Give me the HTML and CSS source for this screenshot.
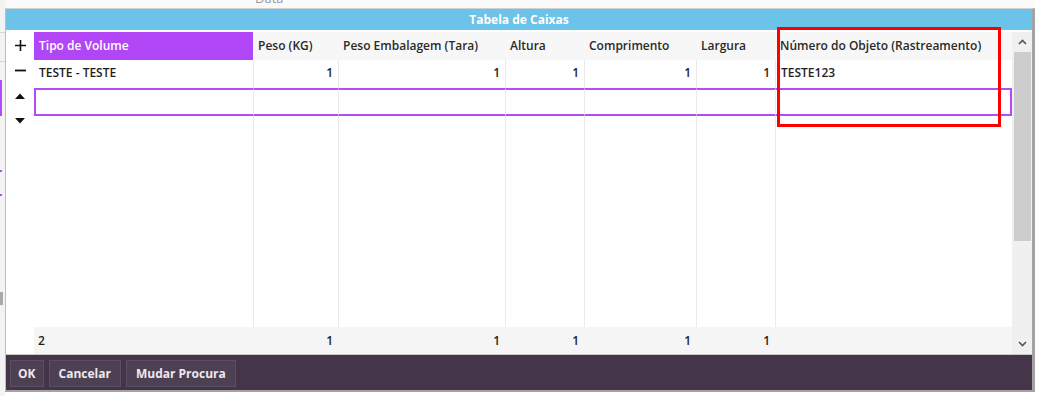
FILE: index.html
```html
<!DOCTYPE html>
<html lang="pt">
<head>
    <meta charset="UTF-8">
    <meta name="viewport" content="width=device-width, initial-scale=1.0">
    <title>Tabela de Caixas</title>
    <link rel="stylesheet" href="styles.css">
</head>
<body>
    <div class="desk">
        <!-- pieces of the page behind the dialog -->
        <div class="edge">
            <span class="edge-line first"></span>
            <span class="edge-line second"></span>
            <span class="edge-mark tall"></span>
            <span class="edge-mark thin a"></span>
            <span class="edge-mark thin b"></span>
            <span class="edge-grey"></span>
        </div>

        <div class="stage">
            <div class="behind-top"><span>Data</span></div>

            <div class="dialog">
                <div class="dialog-title">Tabela de Caixas</div>

                <div class="dialog-body">
                    <div class="row-tools">
                        <button class="tool" title="Adicionar">
                            <svg width="11" height="11" viewBox="0 0 11 11"><path d="M5.5 0v11M0 5.5h11" stroke="#111" stroke-width="1.6"/></svg>
                        </button>
                        <button class="tool" title="Remover">
                            <svg width="11" height="11" viewBox="0 0 11 11"><path d="M0 5.5h11" stroke="#111" stroke-width="1.8"/></svg>
                        </button>
                        <button class="tool" title="Subir">
                            <svg width="10" height="6" viewBox="0 0 10 6"><path d="M0 6L5 0.5 10 6z" fill="#111"/></svg>
                        </button>
                        <button class="tool" title="Descer">
                            <svg width="10" height="6" viewBox="0 0 10 6"><path d="M0 0L5 5.5 10 0z" fill="#111"/></svg>
                        </button>
                    </div>

                    <div class="grid">
                        <div class="th active">Tipo de Volume</div>
                        <div class="th">Peso (KG)</div>
                        <div class="th">Peso Embalagem (Tara)</div>
                        <div class="th">Altura</div>
                        <div class="th">Comprimento</div>
                        <div class="th">Largura</div>
                        <div class="th">Número do Objeto (Rastreamento)</div>

                        <div class="td first">TESTE - TESTE</div>
                        <div class="td num">1</div>
                        <div class="td num">1</div>
                        <div class="td num">1</div>
                        <div class="td num">1</div>
                        <div class="td num">1</div>
                        <div class="td">TESTE123</div>

                        <div class="td sel first"></div>
                        <div class="td sel"></div>
                        <div class="td sel"></div>
                        <div class="td sel"></div>
                        <div class="td sel"></div>
                        <div class="td sel"></div>
                        <div class="td sel last"></div>

                        <div class="td fill first"></div>
                        <div class="td fill"></div>
                        <div class="td fill"></div>
                        <div class="td fill"></div>
                        <div class="td fill"></div>
                        <div class="td fill"></div>
                        <div class="td fill"></div>

                        <div class="tf">2</div>
                        <div class="tf num">1</div>
                        <div class="tf num">1</div>
                        <div class="tf num">1</div>
                        <div class="tf num">1</div>
                        <div class="tf num">1</div>
                        <div class="tf"></div>
                    </div>

                    <div class="vscroll">
                        <span class="vscroll-arrow">
                            <svg width="9" height="6" viewBox="0 0 9 6"><path d="M1 5L4.5 1.5 8 5" fill="none" stroke="#555" stroke-width="1.6"/></svg>
                        </span>
                        <span class="vscroll-thumb"></span>
                        <span class="vscroll-track"></span>
                        <span class="vscroll-arrow">
                            <svg width="9" height="6" viewBox="0 0 9 6"><path d="M1 1L4.5 4.5 8 1" fill="none" stroke="#555" stroke-width="1.6"/></svg>
                        </span>
                    </div>
                </div>

                <div class="dialog-actions">
                    <button class="action ok">OK</button>
                    <button class="action">Cancelar</button>
                    <button class="action">Mudar Procura</button>
                </div>
            </div>
        </div>

        <!-- annotation drawn over the screenshot -->
        <div class="highlight"></div>
    </div>
</body>
</html>
```

FILE: styles.css
```css
/* Base */
body {
    margin: 0;
    background: #fff;
    font-family: "Open Sans", "Noto Sans", Arial, sans-serif;
    font-size: 12px;
    color: #1e1e1e;
}
.desk {
    position: relative;
    display: flex;
    width: 1037px;
    height: 396px;
    overflow: hidden;
}

/* Page behind the dialog */
.edge {
    display: flex;
    flex-direction: column;
    width: 5px;
    background: #f3f3f3;
}
.edge-line {
    height: 1px;
    background: #d6d6d6;
}
.edge-line.first { margin-top: 32px; }
.edge-line.second { margin-top: 28px; }
.edge-mark {
    width: 2px;
    background: #b24cf6;
}
.edge-mark.tall { margin-top: 18px; height: 36px; }
.edge-mark.thin { height: 2px; }
.edge-mark.a { margin-top: 54px; }
.edge-mark.b { margin-top: 22px; }
.edge-grey {
    margin-top: 96px;
    width: 3px;
    height: 13px;
    background: #a9a9a9;
}
.stage {
    display: flex;
    flex-direction: column;
}
.behind-top {
    height: 8px;
    overflow: hidden;
    padding-left: 250px;
    background: #fafafa;
}
.behind-top span {
    display: block;
    margin-top: -11px;
    color: #9a9a9a;
    font-size: 13px;
}

/* Dialog */
.dialog {
    display: flex;
    flex-direction: column;
    width: 1026px;
    border-top: 1px solid #d0d0d0;
    border-left: 1px solid #bdbdbd;
    border-right: 3px solid #a3a3a3;
    border-bottom: 2px solid #a3a3a3;
    background: #fff;
}
.dialog-title {
    height: 21px;
    line-height: 21px;
    background: #6bc3e9;
    color: #fff;
    font-weight: 700;
    text-align: center;
    margin-bottom: 2px;
}
.dialog-body {
    display: flex;
    height: 322px;
}

.row-tools {
    display: flex;
    flex-direction: column;
    width: 28px;
    padding-top: 1px;
}
.tool {
    height: 25px;
    padding: 0;
    border: none;
    background: none;
    display: flex;
    align-items: center;
    justify-content: center;
}

/* Grid */
.grid {
    display: grid;
    grid-template-columns: 219px 85px 167px 79px 112px 79px 237px;
    grid-template-rows: 28px 28px 28px 1fr 27px;
    width: 978px;
}
.th, .td, .tf {
    padding: 0 5px;
    line-height: 28px;
    white-space: nowrap;
    overflow: hidden;
    font-weight: 600;
}
.th {
    background: #f7f7f7;
    color: #2a2a2a;
}
.th.active {
    background: #b146f7;
    color: #fff;
}
.td {
    background: #fff;
    line-height: 26px;
    border-left: 1px solid #ebebeb;
}
.td.first {
    border-left: none;
}
.num {
    text-align: right;
}
.sel {
    border-top: 2px solid #b24cf6;
    border-bottom: 2px solid #b24cf6;
}
.sel.first {
    border-left: 2px solid #b24cf6;
}
.sel.last {
    border-right: 2px solid #b24cf6;
}
.tf {
    background: #f5f5f5;
    line-height: 27px;
    padding-left: 4px;
}

/* Scrollbar */
.vscroll {
    display: flex;
    flex-direction: column;
    align-items: center;
    width: 20px;
    background: #f0f0f0;
}
.vscroll-arrow {
    height: 20px;
    display: flex;
    align-items: center;
    justify-content: center;
}
.vscroll-thumb {
    width: 17px;
    height: 189px;
    background: #cdcdcd;
}
.vscroll-track {
    flex: 1;
}

/* Buttons */
.dialog-actions {
    display: flex;
    gap: 5px;
    height: 36px;
    padding: 5px 4px 0;
    box-sizing: border-box;
    border-top: 1px solid #c9c9c9;
    background: #443648;
}
.action {
    height: 27px;
    padding: 0 9px;
    border: 1px solid #5b4e60;
    background: #4e4053;
    color: #ece8f0;
    font-family: inherit;
    font-size: 12px;
    font-weight: 700;
}
.action.ok {
    padding: 0 7px;
}

/* Annotation */
.highlight {
    position: absolute;
    left: 777px;
    top: 27px;
    width: 218px;
    height: 94px;
    border: 3px solid #f00;
}
```
